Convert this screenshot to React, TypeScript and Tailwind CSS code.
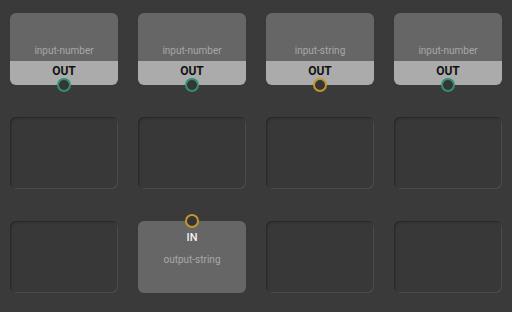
type Cell =
  | { kind: 'input'; label: string; port: 'number' | 'string' }
  | { kind: 'output'; label: string; port: 'number' | 'string' }
  | { kind: 'empty' };

const cells: Cell[] = [
  { kind: 'input', label: 'input-number', port: 'number' },
  { kind: 'input', label: 'input-number', port: 'number' },
  { kind: 'input', label: 'input-string', port: 'string' },
  { kind: 'input', label: 'input-number', port: 'number' },
  { kind: 'empty' },
  { kind: 'empty' },
  { kind: 'empty' },
  { kind: 'empty' },
  { kind: 'empty' },
  { kind: 'output', label: 'output-string', port: 'string' },
  { kind: 'empty' },
  { kind: 'empty' },
];

function Port({ type }: { type: 'number' | 'string' }) {
  return (
    <div
      className={`w-[14px] h-[14px] rounded-full border-2 bg-[#353535] ${
        type === 'number' ? 'border-[#2f8f72]' : 'border-[#c3962f]'
      }`}
    />
  );
}

export default function App() {
  return (
    <div
      className="w-[512px] h-[312px] bg-[#3a3a3a] pl-[10px] pt-[13px] overflow-hidden"
      style={{ fontFamily: 'Roboto, "Liberation Sans", sans-serif' }}
    >
      <div className="grid grid-cols-[repeat(4,108px)] auto-rows-[72px] gap-x-5 gap-y-8">
        {cells.map((cell, i) => {
          if (cell.kind === 'empty') {
            return (
              <div
                key={i}
                className="rounded-md bg-[#383838] shadow-[inset_1px_1px_2px_rgba(0,0,0,0.35),inset_-1px_-1px_0_rgba(255,255,255,0.1)]"
              />
            );
          }
          if (cell.kind === 'input') {
            return (
              <div key={i} className="relative rounded-md overflow-visible flex flex-col">
                <div className="flex-1 bg-[#666666] rounded-t-md flex items-end justify-center pb-[5px]">
                  <span className="text-[10px] text-[#a8a8a8] leading-none">{cell.label}</span>
                </div>
                <div className="h-6 bg-[#ababab] rounded-b-md flex justify-center pt-[4px]">
                  <span className="text-[12px] font-bold text-[#111] leading-none">OUT</span>
                </div>
                <div className="absolute left-1/2 -translate-x-1/2 -bottom-[7px]">
                  <Port type={cell.port} />
                </div>
              </div>
            );
          }
          return (
            <div key={i} className="relative rounded-md bg-[#666666] flex flex-col items-center pt-[11px]">
              <div className="absolute left-1/2 -translate-x-1/2 -top-[7px]">
                <Port type={cell.port} />
              </div>
              <span className="text-[11px] font-medium text-[#f2f2f2] leading-none">IN</span>
              <span className="mt-[12px] text-[10px] text-[#a8a8a8] leading-none">{cell.label}</span>
            </div>
          );
        })}
      </div>
    </div>
  );
}
